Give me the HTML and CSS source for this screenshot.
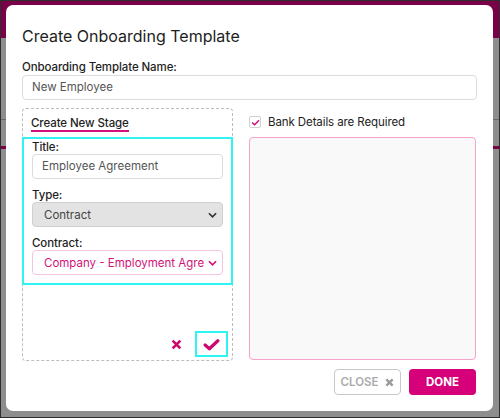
FILE: index.html
```html
<!DOCTYPE html>
<html>
<head>
<meta charset="utf-8">
<link rel="stylesheet" href="styles.css">
</head>
<body>
<div class="screen">
  <div class="dialog">
    <h1 class="title">Create Onboarding Template</h1>
    <label class="label label-name">Onboarding Template Name:</label>
    <div class="input input-wide">New Employee</div>
    <div class="columns">
      <div class="stage">
        <div class="stage-head"><span class="stage-title">Create New Stage</span></div>
        <div class="stage-form">
          <label class="label">Title:</label>
          <div class="input input-inner">Employee Agreement</div>
          <label class="label">Type:</label>
          <div class="select select-grey"><span class="sel-text">Contract</span>
            <svg class="chev" viewBox="0 0 10 6" width="9" height="6"><path d="M1 1 L5 5 L9 1" fill="none" stroke="#333" stroke-width="1.8"/></svg>
          </div>
          <label class="label">Contract:</label>
          <div class="select select-pink"><span class="sel-text">Company - Employment Agre</span>
            <svg class="chev" viewBox="0 0 10 6" width="9" height="6"><path d="M1 1 L5 5 L9 1" fill="none" stroke="#d1127a" stroke-width="1.8"/></svg>
          </div>
        </div>
        <div class="stage-actions">
          <span class="act act-cancel">
            <svg viewBox="0 0 10 10" width="11" height="11"><path d="M1.5 1.5 L8.5 8.5 M8.5 1.5 L1.5 8.5" stroke="#cc0a6e" stroke-width="2.4" fill="none"/></svg>
          </span>
          <span class="act act-ok">
            <svg viewBox="0 0 16 12" width="17" height="13"><path d="M2 6.5 L6 10 L14 2.5" stroke="#cc0a6e" stroke-width="3" fill="none" stroke-linecap="round" stroke-linejoin="round"/></svg>
          </span>
        </div>
      </div>
      <div class="right">
        <div class="check-row">
          <span class="checkbox">
            <svg viewBox="0 0 10 8" width="9" height="7"><path d="M1 4 L4 6.5 L9 1.5" stroke="#d1127a" stroke-width="1.8" fill="none"/></svg>
          </span>
          <span class="check-text">Bank Details are Required</span>
        </div>
        <div class="bank-box"></div>
        <div class="buttons">
          <button class="btn btn-close">CLOSE
            <svg viewBox="0 0 10 10" width="9" height="9"><path d="M1.5 1.5 L8.5 8.5 M8.5 1.5 L1.5 8.5" stroke="#9a9a9a" stroke-width="2.6" fill="none"/></svg>
          </button>
          <button class="btn btn-done">DONE</button>
        </div>
      </div>
    </div>
  </div>
</div>
</body>
</html>
```
FILE: styles.css
```css
* { box-sizing: border-box; }
html, body { margin: 0; padding: 0; }
body {
  width: 500px;
  height: 418px;
  overflow: hidden;
  font-family: Inter, "Open Sans", sans-serif;
  color: #222;
}
.screen {
  width: 500px;
  height: 418px;
  border: 1px solid #2e2e2e;
  background:
    linear-gradient(#7a0048, #7a0048) 0 0 / 100% 37px no-repeat,
    linear-gradient(#6a6a6a, #6a6a6a) 0 118px / 100% 1px no-repeat,
    linear-gradient(#7a0048, #7a0048) 0 145px / 100% 3px no-repeat,
    #8e8e8e;
  padding: 4px 6px 6px 5px;
}
.dialog {
  height: 406px;
  background: #fff;
  border-radius: 7px;
  padding: 21px 16px 16px 16px;
  display: flex;
  flex-direction: column;
}
.title {
  margin: 0;
  font-size: 16px;
  font-weight: 400;
  line-height: 20px;
  color: #1e1e1e;
}
.label {
  display: block;
  font-size: 11.5px;
  letter-spacing: -0.1px;
  font-weight: 500;
  line-height: 13px;
  color: #1e1e1e;
}
.label-name { margin-top: 14px; margin-bottom: 1px; line-height: 14px; }
.input {
  height: 25px;
  border: 1px solid #dcdcdc;
  border-radius: 4px;
  padding: 0 9px;
  font-size: 11.5px;
  line-height: 23px;
  color: #555;
  background: #fff;
}
.input-inner { padding: 0 9px; }
.columns {
  margin-top: 8px;
  display: grid;
  grid-template-columns: 211px 227px;
  column-gap: 16px;
}
.stage {
  height: 253px;
  border: 1px dashed #bdbdbd;
  border-radius: 4px;
  display: flex;
  flex-direction: column;
}
.stage-head {
  height: 28px;
  flex: none;
  display: flex;
  align-items: flex-start;
  padding: 8px 0 0 8px;
}
.stage-title {
  display: block;
  font-size: 11.5px;
  letter-spacing: -0.1px;
  font-weight: 500;
  line-height: 13px;
  color: #1e1e1e;
  border-bottom: 2px solid #d1127a;
}
.stage-form {
  margin: 0 -1px;
  height: 148px;
  flex: none;
  border: 2px solid #2ef4f4;
  padding: 2px 8px 0 8px;
}
.stage-form .input, .stage-form .select { margin-bottom: 10px; }
.select {
  height: 25px;
  border-radius: 4px;
  padding: 0 5px 0 11px;
  font-size: 11.5px;
  display: flex;
  align-items: center;
  justify-content: space-between;
  white-space: nowrap;
  overflow: hidden;
}
.sel-text { overflow: hidden; min-width: 0; }
.select-grey {
  background: #e3e3e3;
  border: 1px solid #d0d0d0;
  color: #444;
}
.select-pink {
  background: #fff;
  border: 1px solid #f6c4de;
  color: #d1127a;
}
.chev { flex: none; margin-left: 4px; }
.stage-actions {
  margin-top: auto;
  display: flex;
  justify-content: flex-end;
  align-items: center;
  gap: 13px;
  padding: 0 4px 3px 0;
}
.act { display: flex; align-items: center; justify-content: center; }
.act-ok {
  width: 33px;
  height: 26px;
  border: 2px solid #2ef4f4;
}
.right { display: flex; flex-direction: column; }
.check-row {
  display: flex;
  align-items: flex-start;
  height: 29px;
  padding-top: 8px;
}
.checkbox {
  width: 12px;
  height: 12px;
  border: 1px solid #d0d0d0;
  border-radius: 2px;
  display: flex;
  align-items: center;
  justify-content: center;
  margin-right: 7px;
}
.check-text { font-size: 11.5px; letter-spacing: -0.1px; line-height: 13px; color: #222; }
.bank-box {
  height: 223px;
  border: 1px solid #f5a3cb;
  border-radius: 4px;
  background: #f9f9f9;
}
.buttons {
  margin-top: 9px;
  display: flex;
  justify-content: flex-end;
  gap: 8px;
}
.btn {
  height: 26px;
  width: 67px;
  border-radius: 4px;
  font-family: inherit;
  font-size: 11.5px;
  font-weight: 600;
  display: flex;
  align-items: center;
  justify-content: center;
  padding: 0;
}
.btn-close {
  background: #fff;
  border: 1px solid #c8c8c8;
  color: #aaa;
  gap: 7px;
}
.btn-done {
  background: #d6007a;
  border: none;
  color: #fff;
  font-weight: 700;
}
```
